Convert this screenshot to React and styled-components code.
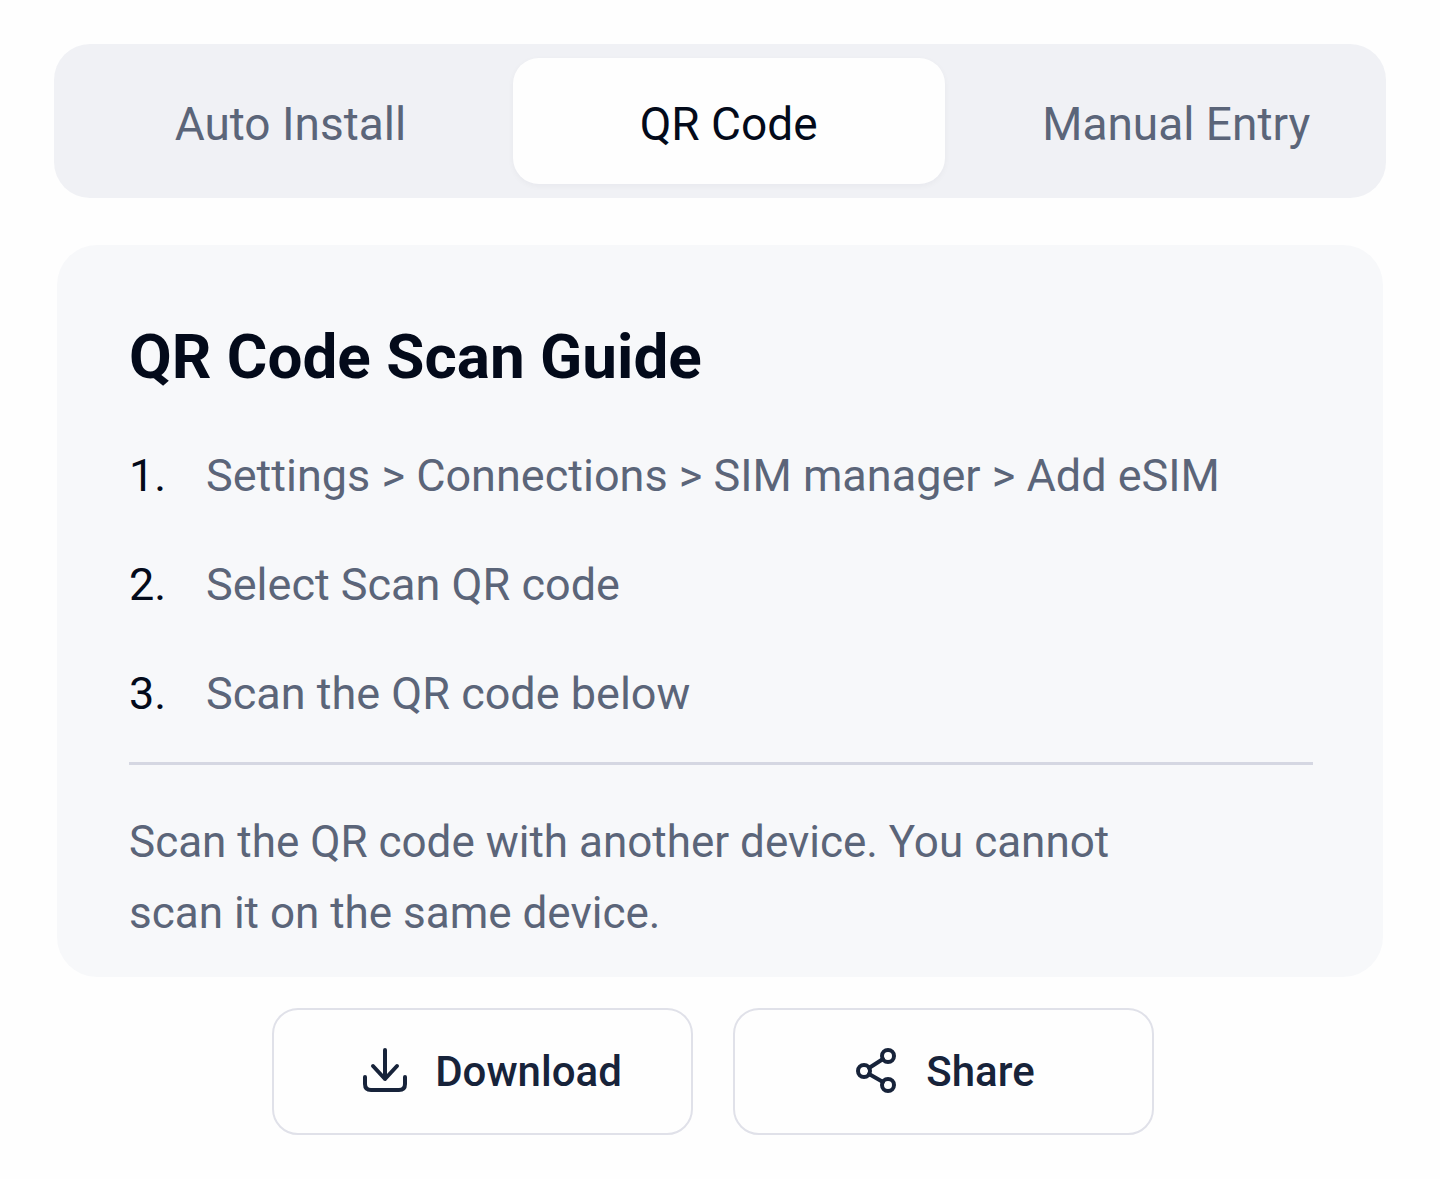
import { useState } from "react";
import styled, { createGlobalStyle } from "styled-components";

const GlobalStyle = createGlobalStyle`
  * {
    box-sizing: border-box;
    margin: 0;
    padding: 0;
  }
  body {
    background: #fefefe;
    font-family: Roboto, sans-serif;
    color: #030a1a;
  }
  button {
    font-family: inherit;
    cursor: pointer;
  }
`;

const tabs = ["Auto Install", "QR Code", "Manual Entry"];

const steps = [
  "Settings > Connections > SIM manager > Add eSIM",
  "Select Scan QR code",
  "Scan the QR code below",
];

const App = () => {
  const [active, setActive] = useState("QR Code");

  return (
    <Page>
      <GlobalStyle />
      <TabBar role="tablist">
        {tabs.map((tab) => (
          <Tab
            key={tab}
            role="tab"
            aria-selected={tab === active}
            $active={tab === active}
            onClick={() => setActive(tab)}
          >
            {tab}
          </Tab>
        ))}
      </TabBar>

      <Card>
        <Title>QR Code Scan Guide</Title>
        <Steps>
          {steps.map((step, i) => (
            <Step key={step}>
              <StepNumber>{i + 1}.</StepNumber>
              <span>{step}</span>
            </Step>
          ))}
        </Steps>
        <Note>
          Scan the QR code with another device. You cannot scan it on the same
          device.
        </Note>
      </Card>

      <Actions>
        <ActionButton>
          <DownloadIcon />
          Download
        </ActionButton>
        <ActionButton>
          <ShareIcon />
          Share
        </ActionButton>
      </Actions>
    </Page>
  );
};

const DownloadIcon = () => (
  <Icon viewBox="0 0 48 48" aria-hidden="true">
    <path d="M24 2v29M12 18l12 13 12-13" />
    <path d="M4 29v7q0 6 6 6h28q6 0 6-6v-7" />
  </Icon>
);

const ShareIcon = () => (
  <Icon viewBox="0 0 48 48" aria-hidden="true">
    <circle cx="36" cy="8" r="6" />
    <circle cx="12" cy="23" r="6" />
    <circle cx="36" cy="37" r="6" />
    <path d="M17 20l14-9M17 26l14 8" />
  </Icon>
);

const Page = styled.main`
  padding: 44px 54px;
`;

const TabBar = styled.div`
  display: grid;
  grid-template-columns: 103fr 100fr 99fr;
  padding: 14px;
  border-radius: 36px;
  background: #f0f1f5;
`;

const Tab = styled.button`
  height: 126px;
  padding-top: 6px;
  border: none;
  border-radius: 26px;
  font-size: 46px;
  color: ${({ $active }) => ($active ? "#030a1a" : "#5b6579")};
  background: ${({ $active }) => ($active ? "#fefefe" : "transparent")};
  box-shadow: ${({ $active }) =>
    $active ? "0 2px 6px rgba(20, 30, 60, 0.04)" : "none"};
  &:last-child {
    padding-left: 36px;
  }
`;

const Card = styled.section`
  margin: 47px 3px 0;
  padding: 72px 70px 28px 72px;
  border-radius: 40px;
  background: #f7f8fa;
`;

const Title = styled.h2`
  font-size: 62px;
  line-height: 80px;
  font-weight: 700;
`;

const Steps = styled.ol`
  list-style: none;
  padding: 24px 0 14px;
  border-bottom: 3px solid #d5d7e2;
`;

const Step = styled.li`
  display: flex;
  font-size: 45px;
  line-height: 109px;
  color: #5b6579;
`;

const StepNumber = styled.span`
  flex: 0 0 77px;
  color: #030a1a;
`;

const Note = styled.p`
  max-width: 1040px;
  padding-top: 42px;
  font-size: 44px;
  line-height: 71px;
  color: #5b6579;
`;

const Actions = styled.div`
  display: flex;
  justify-content: center;
  gap: 40px;
  margin-top: 31px;
  padding-right: 14px;
`;

const ActionButton = styled.button`
  display: flex;
  align-items: center;
  justify-content: center;
  gap: 26px;
  flex: 0 1 421px;
  height: 127px;
  border: 2px solid #e0e1e9;
  border-radius: 26px;
  background: #fefefe;
  font-size: 42px;
  font-weight: 500;
  color: #17233a;
  &:first-child {
    padding-left: 18px;
  }
`;

const Icon = styled.svg`
  width: 48px;
  height: 48px;
  fill: none;
  stroke: currentColor;
  stroke-width: 4;
  stroke-linecap: round;
  stroke-linejoin: round;
`;

export default App;
